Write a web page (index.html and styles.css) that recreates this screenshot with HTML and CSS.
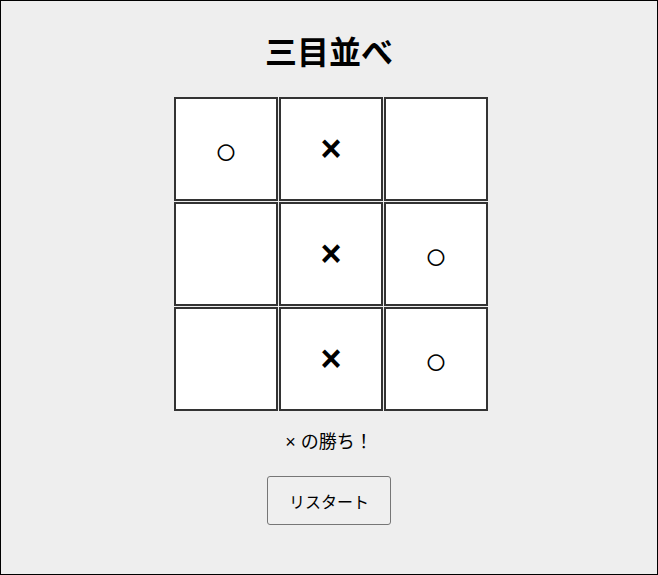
FILE: index.html
```html
<!DOCTYPE html>
<html lang="ja">
<head>
<meta charset="utf-8">
<title>三目並べ</title>
<link rel="stylesheet" href="styles.css">
</head>
<body>
<div class="page">
  <h1 class="title">三目並べ</h1>
  <div class="board">
    <button class="cell mark-o">○</button>
    <button class="cell">×</button>
    <button class="cell"></button>
    <button class="cell"></button>
    <button class="cell">×</button>
    <button class="cell mark-o">○</button>
    <button class="cell"></button>
    <button class="cell">×</button>
    <button class="cell mark-o">○</button>
  </div>
  <p class="status">× の勝ち！</p>
  <button class="restart">リスタート</button>
</div>
</body>
</html>
```
FILE: styles.css
```css
html, body {
  margin: 0;
  padding: 0;
}
body {
  font-family: "Liberation Sans", "Noto Sans CJK JP", sans-serif;
  background: #eeeeee;
  color: #000;
}
.page {
  box-sizing: border-box;
  height: 575px;
  border: 1px solid #000;
  display: flex;
  flex-direction: column;
  align-items: center;
}
.title {
  margin: 33px 0 0;
  font-size: 32px;
  line-height: 38px;
  font-weight: 700;
}
.board {
  margin: 25px 0 0 4px;
  display: grid;
  grid-template-columns: repeat(3, 104px);
  grid-auto-rows: 104px;
  gap: 1px;
}
.cell {
  box-sizing: border-box;
  width: 104px;
  height: 104px;
  margin: 0;
  padding: 0;
  border: 2px solid #333;
  background: #fff;
  font-family: "Liberation Sans", "Noto Sans CJK JP", sans-serif;
  font-size: 36px;
  font-weight: 700;
  color: #000;
  display: flex;
  align-items: center;
  justify-content: center;
}
.mark-o {
  padding-top: 4px;
  font-size: 38px;
}
.status {
  margin: 18px 0 0;
  font-size: 18px;
  line-height: 27px;
}
.restart {
  margin-top: 20px;
  box-sizing: border-box;
  width: 124px;
  height: 49px;
  padding: 0;
  border: 1px solid #767676;
  border-radius: 3px;
  background: #efefef;
  font-family: "Liberation Sans", "Noto Sans CJK JP", sans-serif;
  font-size: 16px;
  color: #000;
}
```
